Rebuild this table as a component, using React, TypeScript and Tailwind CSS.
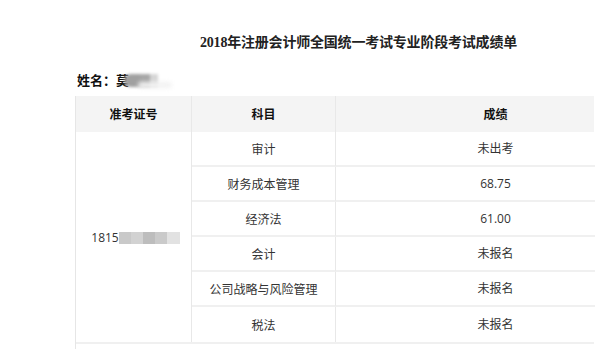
import React from "react";

const subjects = [
  { name: "审计", score: "未出考" },
  { name: "财务成本管理", score: "68.75" },
  { name: "经济法", score: "61.00" },
  { name: "会计", score: "未报名" },
  { name: "公司战略与风险管理", score: "未报名" },
  { name: "税法", score: "未报名" },
];

const sans = "font-['Microsoft_YaHei','Noto_Sans_CJK_SC',sans-serif]";

export default function App() {
  return (
    <div className={`relative h-[361px] w-[612px] overflow-hidden bg-white text-[#333] ${sans}`}>
      <h1 className="pl-[200px] pt-[35px] font-['Liberation_Serif','Noto_Sans_CJK_SC',serif] text-[14px] font-bold leading-[16px] tracking-[-0.2px] text-[#222]">
        2018年注册会计师全国统一考试专业阶段考试成绩单
      </h1>

      <div className="mt-[21px] flex h-[16px] items-center pl-[77px] text-[13px] font-bold leading-[16px] text-[#111]">
        <span>姓名：莫</span>
        <span className="relative ml-[-5px] flex h-[14px] items-center blur-[1.5px]">
          <span className="h-[13px] w-[16px] rounded-l-full bg-[#a0a0a0]" />
          <span className="h-[13px] w-[10px] bg-[#a6a6a6]" />
          <span className="h-[13px] w-[8px] bg-[#d6d6d6]" />
        </span>
        <span className="ml-[-20px] mt-[10px] h-[6px] w-[34px] rounded-full bg-[#f2f2f2] blur-[2px]" />
      </div>

      <div className="ml-[75px] mt-[8px] w-[519px] border-l border-[#e6e6e6]">
        <div className="grid h-[36px] grid-cols-[116px_144px_259px] bg-[#f4f4f4] text-[12px] font-bold text-[#111]">
          <div className="flex items-center justify-center border-r border-[#e8e8e8]">准考证号</div>
          <div className="flex items-center justify-center border-r border-[#e8e8e8]">科目</div>
          <div className="flex items-center justify-center pl-[60px]">成绩</div>
        </div>

        <div className="grid grid-cols-[116px_144px_259px] border-b-2 border-[#f0f0f0] text-[12px]">
          <div className="row-span-6 flex items-center justify-center border-r border-[#e8e8e8] pt-[1px] pl-[4px]">
            <span className="font-['Open_Sans',sans-serif] text-[12px] text-[#333]">1815</span>
            <span className="flex h-[12px] blur-[0.6px]">
              <span className="w-[12px] bg-[#c9c9c9]" />
              <span className="w-[12px] bg-[#d2d2d2]" />
              <span className="w-[12px] bg-[#bdbdbd]" />
              <span className="w-[12px] bg-[#cacaca]" />
              <span className="w-[13px] bg-[#e2e2e2]" />
            </span>
          </div>
          {subjects.map((s, i) => (
            <React.Fragment key={s.name}>
              <div
                className={`flex h-[35px] items-center justify-center border-r border-[#e8e8e8] ${
                  i < subjects.length - 1 ? "border-b-2 border-b-[#f0f0f0]" : ""
                }`}
              >
                {s.name}
              </div>
              <div
                className={`flex h-[35px] items-center justify-center pl-[60px] font-['Open_Sans','Noto_Sans_CJK_SC',sans-serif] ${
                  i < subjects.length - 1 ? "border-b-2 border-[#f0f0f0]" : ""
                }`}
              >
                {s.score}
              </div>
            </React.Fragment>
          ))}
        </div>
        <div className="h-[5px]" />
      </div>
    </div>
  );
}
